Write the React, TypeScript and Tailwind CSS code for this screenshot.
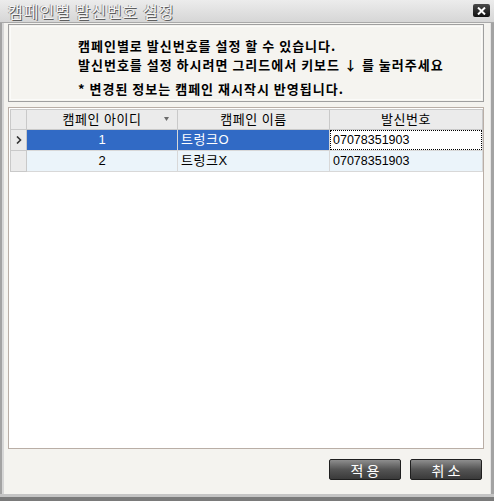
import React from 'react'

const rows = [
  { id: '1', name: '트렁크O', num: '07078351903' },
  { id: '2', name: '트렁크X', num: '07078351903' },
]

const font = 'font-["Liberation_Sans","Noto_Sans_CJK_KR",sans-serif]'

const App = () => {
  return (
    <div className={`w-[494px] h-[501px] flex flex-col bg-[#f4f3ef] overflow-hidden ${font}`}>
      {/* title bar */}
      <div className="h-[23px] shrink-0 flex items-center justify-between pl-[8px] pr-[4px] bg-linear-to-b from-[#ececec] to-[#d6d6d6] border-b border-[#a9a9a9]">
        <span className="text-[16px] leading-none tracking-[1px] text-[#f4f4f4] [text-shadow:1px_1px_0_#5e5e5e,-1px_0_0_#9a9a9a] font-['Noto_Sans_CJK_KR',sans-serif]">
          캠페인별 발신번호 설정
        </span>
        <div className="w-[17px] h-[13px] mt-[-1px] rounded-[2px] bg-linear-to-b from-[#4a4a4a] to-[#111] flex items-center justify-center">
          <svg width="9" height="8" viewBox="0 0 9 8">
            <path d="M1 0.5 L8 7.5 M8 0.5 L1 7.5" stroke="white" strokeWidth="2" />
          </svg>
        </div>
      </div>

      {/* body */}
      <div className="flex-1 flex border-l-2 border-[#a3a3a3]">
        <div className="flex-1 flex flex-col border-l-2 border-[#d6d6d6] pl-[4px] pr-[6px]">
          {/* info panel */}
          <div className="mt-[1px] h-[78px] border border-[#9f9f9f] p-[1px]">
            <div className="h-full border border-[#fbfbf9] bg-[#f5f4f0] pl-[67px] pt-[9px] text-[13px] font-bold tracking-[1px] text-black font-['Noto_Sans_CJK_KR',sans-serif] leading-[19px]">
              <p>캠페인별로 발신번호를 설정 할 수 있습니다.</p>
              <p>발신번호를 설정 하시려면 그리드에서 키보드 ↓ 를 눌러주세요</p>
              <p className="mt-[5px]">* 변경된 정보는 캠페인 재시작시 반영됩니다.</p>
            </div>
          </div>

          {/* grid */}
          <div className="mt-[5px] h-[342px] border border-[#b9aea6] bg-white p-[1px] pr-0 text-[13px]">
            <div className="grid grid-cols-[16px_151px_152px_153px] border-l border-t border-[#c9c9c9]">
              <div className="h-[20px] bg-[#ebebeb] border-r border-b border-[#c9c9c9]" />
              <div className="h-[20px] bg-[#ebebeb] border-r border-b border-[#c9c9c9] relative flex items-center justify-center tracking-[0.5px]">
                캠페인 아이디
                <svg className="absolute right-[8px] top-[7px]" width="5" height="4" viewBox="0 0 5 4">
                  <path d="M0 0 H5 L2.5 4 Z" fill="#6b6b6b" />
                </svg>
              </div>
              <div className="h-[20px] bg-[#ebebeb] border-r border-b border-[#c9c9c9] flex items-center justify-center tracking-[0.5px]">캠페인 이름</div>
              <div className="h-[20px] bg-[#ebebeb] border-r border-b border-[#c9c9c9] flex items-center justify-center tracking-[0.5px]">발신번호</div>

              {rows.map((r, i) => {
                const sel = i === 0
                return (
                  <React.Fragment key={r.id}>
                    <div className="h-[21px] bg-[#ebebeb] border-r border-b border-[#c9c9c9] flex items-center justify-center">
                      {sel && (
                        <svg width="6" height="8" viewBox="0 0 6 8">
                          <path d="M1 0.5 L4.5 4 L1 7.5" stroke="#333" strokeWidth="1.6" fill="none" />
                        </svg>
                      )}
                    </div>
                    <div className={`h-[21px] border-r border-b border-[#d8d8d8] flex items-center justify-center ${sel ? 'bg-[#316ac5] text-white' : 'bg-[#ebf4fa] text-black'}`}>
                      {r.id}
                    </div>
                    <div className={`h-[21px] border-r border-b border-[#d8d8d8] flex items-center pl-[3px] tracking-[0.5px] ${sel ? 'bg-[#316ac5] text-white' : 'bg-[#ebf4fa] text-black'}`}>
                      {r.name}
                    </div>
                    <div className={`h-[21px] border-r border-b border-[#d8d8d8] flex items-center text-[12.5px] ${sel ? 'bg-white text-black' : 'bg-[#ebf4fa] text-black pl-[3px]'}`}>
                      {sel ? (
                        <div className="w-full h-full border border-dotted border-black flex items-center pl-[2px]">{r.num}</div>
                      ) : (
                        r.num
                      )}
                    </div>
                  </React.Fragment>
                )
              })}
            </div>
          </div>

          {/* buttons */}
          <div className="mt-[10px] flex justify-end gap-[9px] pr-[2px]">
            {['적용', '취소'].map((t) => (
              <button
                key={t}
                className="w-[72px] h-[21px] rounded-[2px] border border-[#1f1f1f] bg-linear-to-b from-[#8e8e8e] via-[#545454] to-[#3a3a3a] text-white text-[14px] tracking-[3px] pl-[3px] font-['Noto_Sans_CJK_KR',sans-serif] leading-none"
              >
                {t}
              </button>
            ))}
          </div>
        </div>
        <div className="w-[4px] border-l border-[#e4e4e4] bg-[#a3a3a3]" />
      </div>

      {/* bottom edge */}
      <div className="h-[3px] shrink-0 bg-[#c4c4c4]" />
      <div className="h-[4px] shrink-0 bg-[#7a7a7a]" />
    </div>
  )
}

export default App
